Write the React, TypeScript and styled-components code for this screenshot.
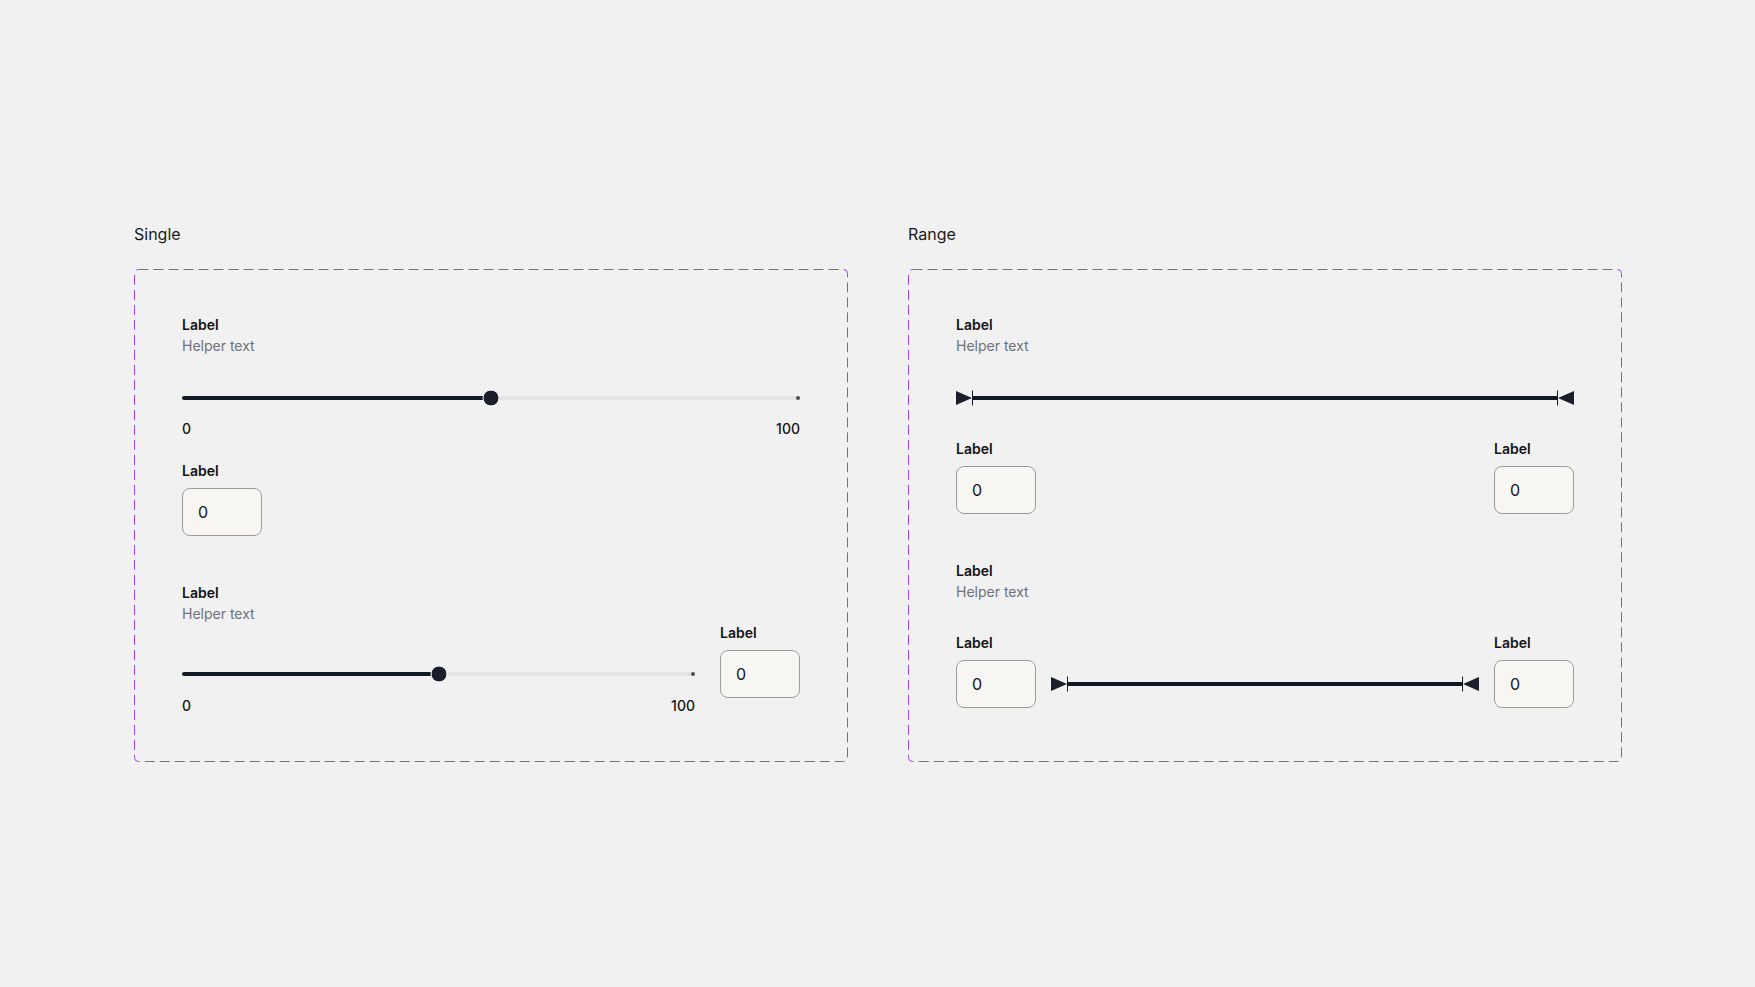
import styled, { createGlobalStyle } from "styled-components";

const GlobalStyle = createGlobalStyle`
	html, body {
		margin: 0;
		padding: 0;
		background: #f1f1f1;
	}
	body {
		font-family: Inter, "Noto Sans", "Liberation Sans", sans-serif;
		color: #141414;
		-webkit-font-smoothing: antialiased;
	}
`;

const Page = styled.main`
	display: flex;
	gap: 60px;
	padding: 222px 0 0 134px;
	min-height: 100vh;
	box-sizing: border-box;
`;

const Section = styled.section`
	display: flex;
	flex-direction: column;
`;

const Title = styled.h2`
	margin: 0 0 23px;
	font-size: 16px;
	line-height: 24px;
	font-weight: 400;
	color: #1a1a1a;
`;

const Frame = styled.div`
	position: relative;
	width: 714px;
	height: 493px;
	box-sizing: border-box;
	padding: 46px 48px 0;
	display: flex;
	flex-direction: column;
`;

const Outline = styled.svg`
	position: absolute;
	inset: 0;
	width: 100%;
	height: 100%;
	pointer-events: none;

	rect {
		width: calc(100% - 1px);
		height: calc(100% - 1px);
		fill: none;
		stroke: #9747ff;
		stroke-width: 1;
		stroke-dasharray: 10 5;
	}
`;

const Block = styled.div<{ $gap?: number }>`
	display: flex;
	flex-direction: column;
	margin-top: ${(p) => p.$gap ?? 0}px;
`;

const Label = styled.div`
	font-size: 14px;
	line-height: 20px;
	font-weight: 600;
	color: #141414;
`;

const Helper = styled.div`
	margin-top: 1px;
	font-size: 14px;
	line-height: 20px;
	font-weight: 400;
	color: #6f717a;
`;

const SliderBox = styled.div<{ $top: number }>`
	position: relative;
	height: 24px;
	margin-top: ${(p) => p.$top}px;
	display: flex;
	align-items: center;
`;

const Rail = styled.div`
	flex: 1;
	height: 4px;
	border-radius: 2px;
	background: #e4e4e4;
	display: flex;
`;

const Fill = styled.div`
	height: 4px;
	border-radius: 2px 0 0 2px;
	background: #141824;
`;

const Thumb = styled.div`
	position: absolute;
	top: 50%;
	width: 15px;
	height: 15px;
	border-radius: 50%;
	border: 1px solid #ffffff;
	background: #1b1f2b;
	transform: translate(-50%, -50%);
`;

const EndDot = styled.div`
	position: absolute;
	right: 0;
	top: 50%;
	width: 4px;
	height: 4px;
	border-radius: 50%;
	background: #4d5058;
	transform: translateY(-50%);
`;

const Values = styled.div<{ $top: number }>`
	display: flex;
	justify-content: space-between;
	margin-top: ${(p) => p.$top}px;
	font-size: 14px;
	line-height: 20px;
	font-weight: 500;
	color: #141414;
`;

const Field = styled.div<{ $top?: number }>`
	display: flex;
	flex-direction: column;
	margin-top: ${(p) => p.$top ?? 0}px;
`;

const InputBox = styled.div`
	margin-top: 7px;
	width: 80px;
	height: 48px;
	box-sizing: border-box;
	border: 1px solid #9c9c9c;
	border-radius: 8px;
	background: #f7f6f2;
	padding: 0 15px;
	display: flex;
	align-items: center;
	font-size: 16px;
	color: #141414;
`;

const Row = styled.div<{ $top: number; $align?: string }>`
	display: flex;
	align-items: ${(p) => p.$align ?? "flex-start"};
	justify-content: space-between;
	gap: 15px;
	margin-top: ${(p) => p.$top}px;
`;

const SliderColumn = styled.div`
	flex: 1;
	display: flex;
	flex-direction: column;
	margin-right: 10px;
`;

const RangeBox = styled.div<{ $bottom?: number }>`
	flex: 1;
	height: 24px;
	display: flex;
	align-items: center;
	margin-bottom: ${(p) => p.$bottom ?? 0}px;
`;

const RangeTrack = styled.div`
	flex: 1;
	height: 4px;
	background: #141824;
`;

const Handle = ({ flip }: { flip?: boolean }) => (
	<svg width="17" height="16" viewBox="0 0 17 16" style={flip ? { transform: "scaleX(-1)" } : undefined}>
		<polygon points="0,1 16,8 0,15" fill="#1b1f2b" />
		<line x1="16.5" y1="0.5" x2="16.5" y2="15.5" stroke="#141824" strokeWidth="1" />
	</svg>
);

function Slider({ value, top }: { value: number; top: number }) {
	return (
		<SliderBox $top={top}>
			<Rail>
				<Fill style={{ width: `${value}%` }} />
			</Rail>
			<EndDot />
			<Thumb style={{ left: `${value}%` }} />
		</SliderBox>
	);
}

function RangeSlider({ bottom }: { bottom?: number }) {
	return (
		<RangeBox $bottom={bottom}>
			<Handle />
			<RangeTrack />
			<Handle flip />
		</RangeBox>
	);
}

function NumberField({ top }: { top?: number }) {
	return (
		<Field $top={top}>
			<Label>Label</Label>
			<InputBox>0</InputBox>
		</Field>
	);
}

function DashedOutline() {
	return (
		<Outline aria-hidden>
			<rect x="0.5" y="0.5" rx="4" ry="4" />
		</Outline>
	);
}

export default function App() {
	return (
		<>
			<GlobalStyle />
			<Page>
				<Section>
					<Title>Single</Title>
					<Frame>
						<DashedOutline />
						<Block>
							<Label>Label</Label>
							<Helper>Helper text</Helper>
							<Slider value={50} top={30} />
							<Values $top={9}>
								<span>0</span>
								<span>100</span>
							</Values>
							<NumberField top={22} />
						</Block>
						<Block $gap={47}>
							<Label>Label</Label>
							<Helper>Helper text</Helper>
							<Row $top={-1}>
								<SliderColumn>
									<Slider value={50} top={39} />
									<Values $top={10}>
										<span>0</span>
										<span>100</span>
									</Values>
								</SliderColumn>
								<NumberField />
							</Row>
						</Block>
					</Frame>
				</Section>

				<Section>
					<Title>Range</Title>
					<Frame>
						<DashedOutline />
						<Block>
							<Label>Label</Label>
							<Helper>Helper text</Helper>
							<SliderBox $top={30}>
								<RangeSlider />
							</SliderBox>
							<Row $top={29}>
								<NumberField />
								<NumberField />
							</Row>
						</Block>
						<Block $gap={47}>
							<Label>Label</Label>
							<Helper>Helper text</Helper>
							<Row $top={31} $align="flex-end">
								<NumberField />
								<RangeSlider bottom={12} />
								<NumberField />
							</Row>
						</Block>
					</Frame>
				</Section>
			</Page>
		</>
	);
}
